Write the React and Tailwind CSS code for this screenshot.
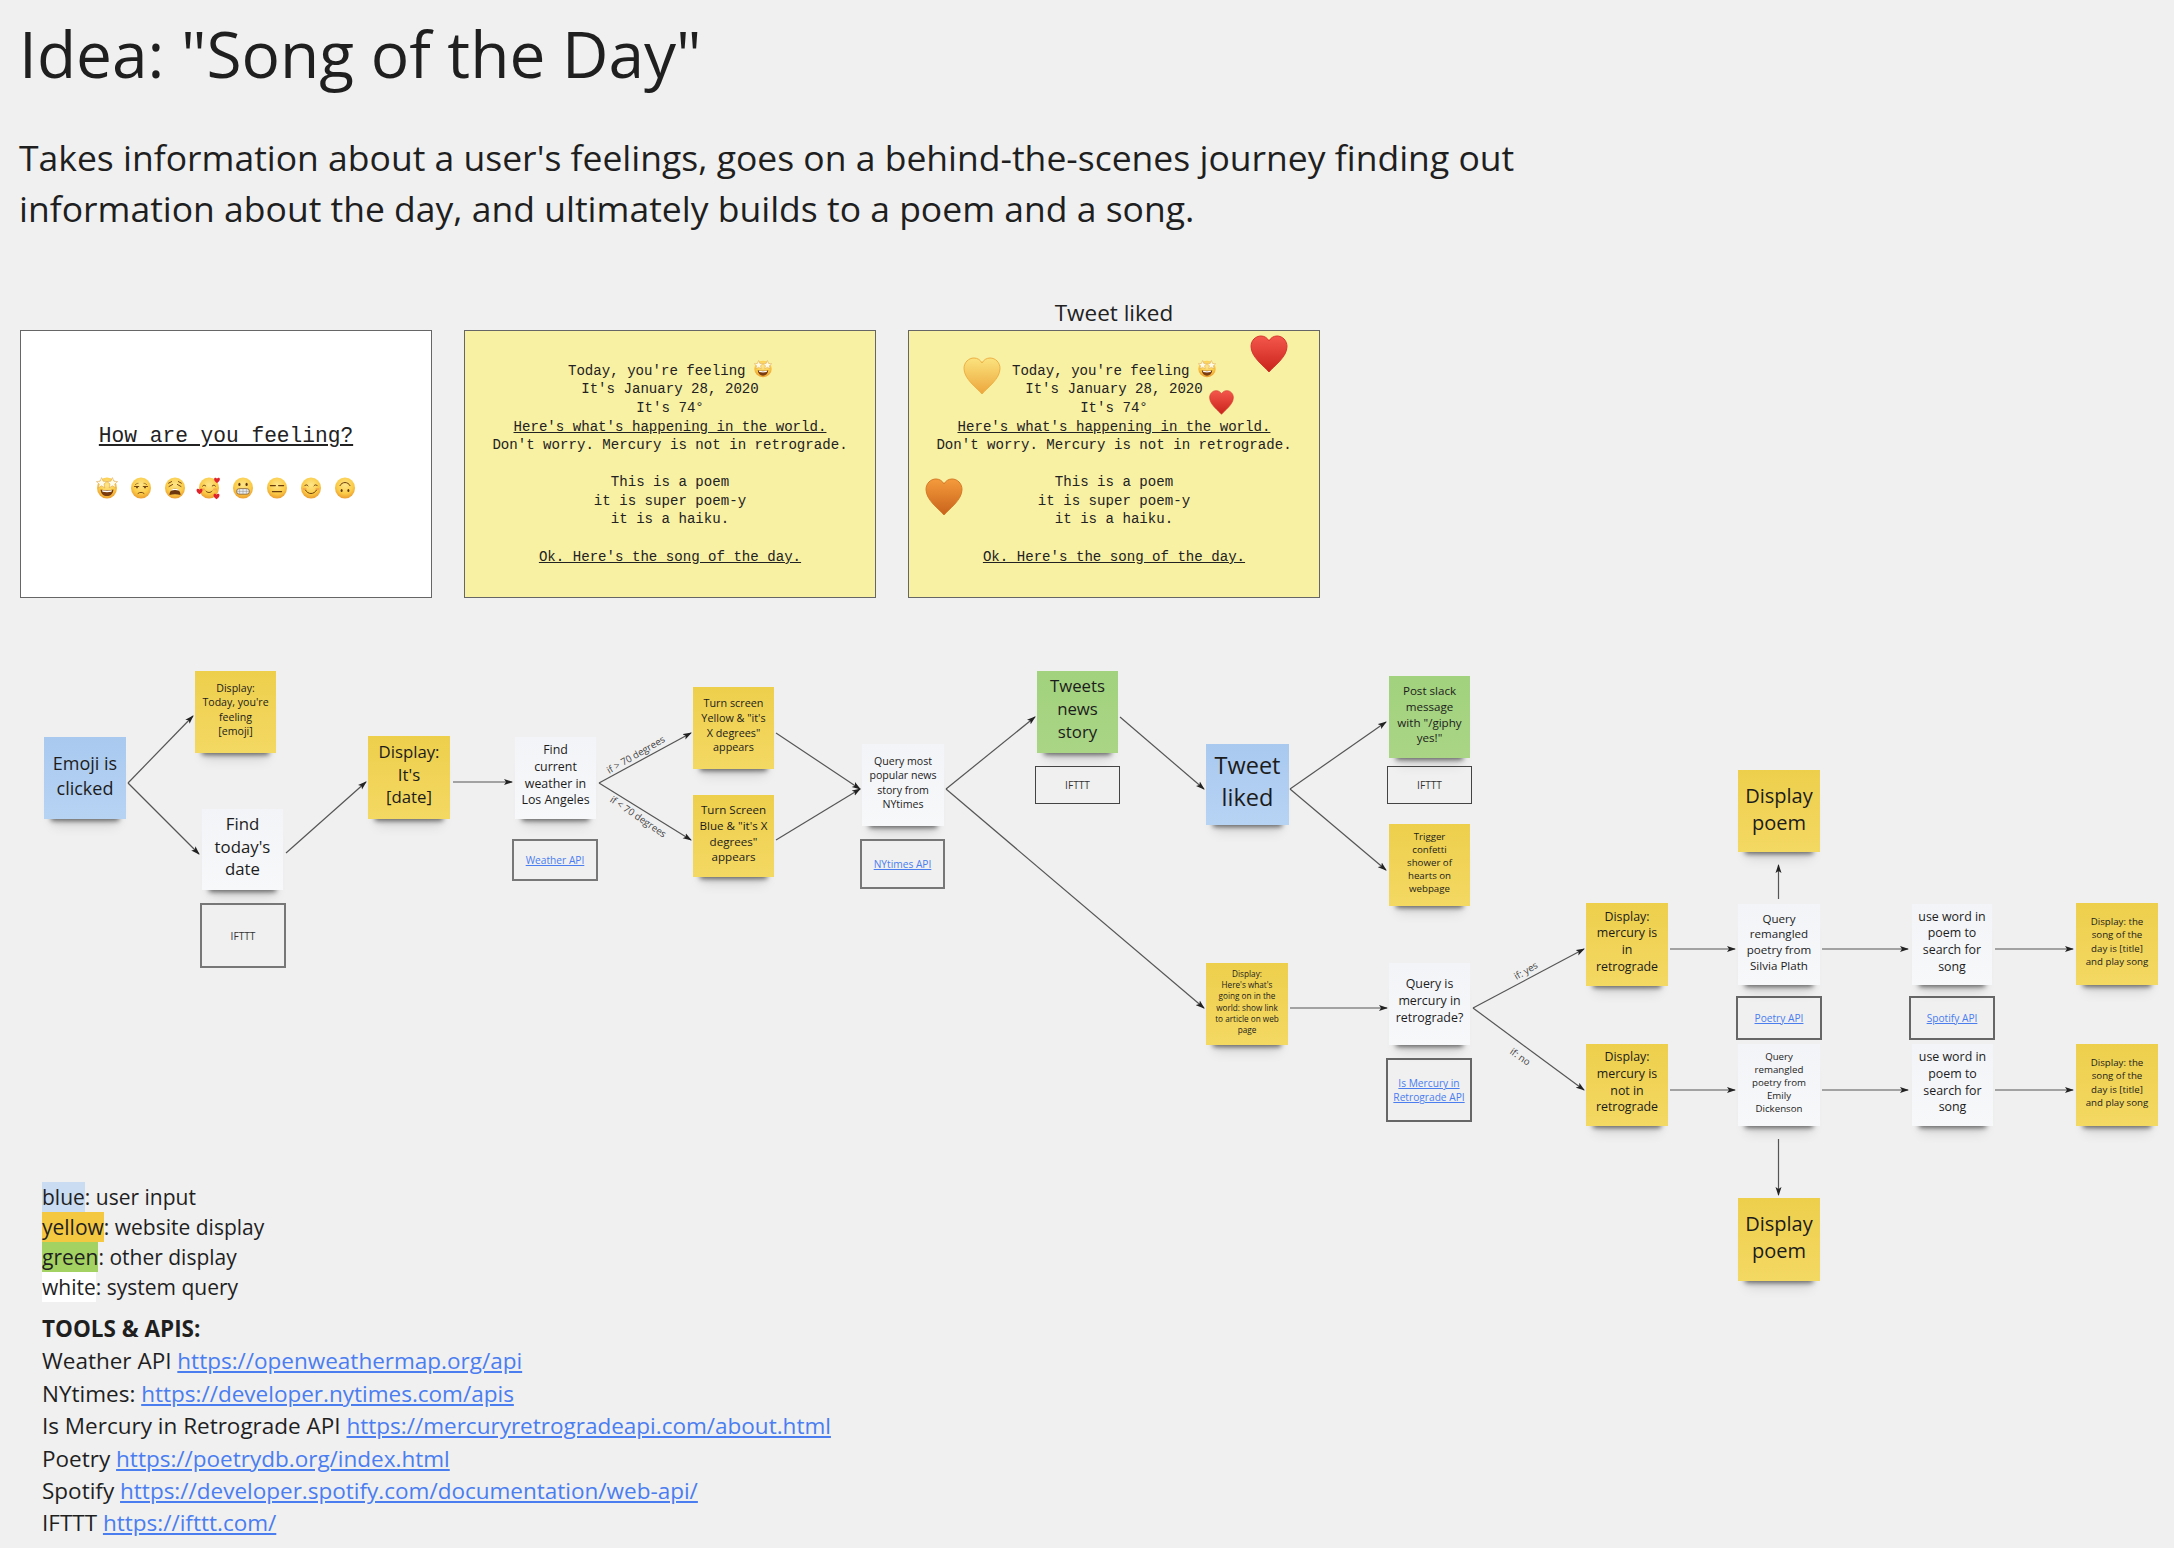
import React from 'react';

const stickyColors = {
  blue: 'from-[#a9c9ef] to-[#b7d3f4]',
  yellow: 'from-[#eecf4c] to-[#f3d862]',
  green: 'from-[#a2d27e] to-[#a9d584]',
  white: 'from-[#f3f4f7] to-[#f7f8fa]',
};

const stickies = [
  { c: 'blue', pos: 'left-[44px] top-[87px] w-[82px] h-[82px] text-[18px]', lines: ['Emoji is', 'clicked'] },
  { c: 'yellow', pos: 'left-[195px] top-[21px] w-[81px] h-[82px] text-[10.6px]', lines: ['Display:', "Today, you're", 'feeling', '[emoji]'] },
  { c: 'white', pos: 'left-[202px] top-[159px] w-[81px] h-[81px] text-[16.8px]', lines: ['Find', "today's", 'date'] },
  { c: 'yellow', pos: 'left-[368px] top-[86px] w-[82px] h-[83px] text-[16.8px]', lines: ['Display:', "It's", '[date]'] },
  { c: 'white', pos: 'left-[515px] top-[87px] w-[81px] h-[82px] text-[12.4px]', lines: ['Find', 'current', 'weather in', 'Los Angeles'] },
  { c: 'yellow', pos: 'left-[693px] top-[37px] w-[81px] h-[82px] text-[10.8px]', lines: ['Turn screen', 'Yellow & "it\'s', 'X degrees"', 'appears'] },
  { c: 'yellow', pos: 'left-[693px] top-[145px] w-[81px] h-[82px] text-[11.6px]', lines: ['Turn Screen', 'Blue & "it\'s X', 'degrees"', 'appears'] },
  { c: 'white', pos: 'left-[862px] top-[94px] w-[82px] h-[82px] text-[10.6px]', lines: ['Query most', 'popular news', 'story from', 'NYtimes'] },
  { c: 'green', pos: 'left-[1037px] top-[21px] w-[81px] h-[82px] text-[16.8px]', lines: ['Tweets', 'news', 'story'] },
  { c: 'blue', pos: 'left-[1206px] top-[94px] w-[83px] h-[81px] text-[23.5px]', lines: ['Tweet', 'liked'] },
  { c: 'green', pos: 'left-[1389px] top-[26px] w-[81px] h-[82px] text-[11.6px]', lines: ['Post slack', 'message', 'with "/giphy', 'yes!"'] },
  { c: 'yellow', pos: 'left-[1389px] top-[174px] w-[81px] h-[82px] text-[9.7px]', lines: ['Trigger', 'confetti', 'shower of', 'hearts on', 'webpage'] },
  { c: 'yellow', pos: 'left-[1206px] top-[313px] w-[82px] h-[82px] text-[8.2px]', lines: ['Display:', "Here's what's", 'going on in the', 'world: show link', 'to article on web', 'page'] },
  { c: 'white', pos: 'left-[1389px] top-[313px] w-[81px] h-[82px] text-[12.4px]', lines: ['Query is', 'mercury in', 'retrograde?'] },
  { c: 'yellow', pos: 'left-[1586px] top-[253px] w-[82px] h-[83px] text-[12.4px]', lines: ['Display:', 'mercury is', 'in', 'retrograde'] },
  { c: 'yellow', pos: 'left-[1586px] top-[394px] w-[82px] h-[82px] text-[12.4px]', lines: ['Display:', 'mercury is', 'not in', 'retrograde'] },
  { c: 'yellow', pos: 'left-[1738px] top-[120px] w-[82px] h-[82px] text-[20px]', lines: ['Display', 'poem'] },
  { c: 'white', pos: 'left-[1738px] top-[254px] w-[82px] h-[81px] text-[11.6px]', lines: ['Query', 'remangled', 'poetry from', 'Silvia Plath'] },
  { c: 'white', pos: 'left-[1738px] top-[394px] w-[82px] h-[82px] text-[9.7px]', lines: ['Query', 'remangled', 'poetry from', 'Emily', 'Dickenson'] },
  { c: 'yellow', pos: 'left-[1738px] top-[548px] w-[82px] h-[83px] text-[20px]', lines: ['Display', 'poem'] },
  { c: 'white', pos: 'left-[1912px] top-[254px] w-[80px] h-[81px] text-[12.4px]', lines: ['use word in', 'poem to', 'search for', 'song'] },
  { c: 'white', pos: 'left-[1912px] top-[394px] w-[81px] h-[82px] text-[12.4px]', lines: ['use word in', 'poem to', 'search for', 'song'] },
  { c: 'yellow', pos: 'left-[2076px] top-[253px] w-[82px] h-[82px] text-[9.7px]', lines: ['Display: the', 'song of the', 'day is [title]', 'and play song'] },
  { c: 'yellow', pos: 'left-[2076px] top-[394px] w-[82px] h-[82px] text-[9.7px]', lines: ['Display: the', 'song of the', 'day is [title]', 'and play song'] },
];

const apiBoxes = [
  { pos: 'left-[200px] top-[253px] w-[86px] h-[65px] border-2 border-[#777777]', label: 'IFTTT' },
  { pos: 'left-[512px] top-[189px] w-[86px] h-[42px] border-2 border-[#777777]', label: 'Weather API', link: true },
  { pos: 'left-[860px] top-[189px] w-[85px] h-[50px] border-2 border-[#777777]', label: 'NYtimes API', link: true },
  { pos: 'left-[1035px] top-[116px] w-[85px] h-[38px] border border-[#444444]', label: 'IFTTT' },
  { pos: 'left-[1387px] top-[116px] w-[85px] h-[38px] border border-[#444444]', label: 'IFTTT' },
  { pos: 'left-[1386px] top-[408px] w-[86px] h-[64px] border-2 border-[#666666]', label: 'Is Mercury in Retrograde API', link: true },
  { pos: 'left-[1736px] top-[346px] w-[86px] h-[44px] border-2 border-[#666666]', label: 'Poetry API', link: true },
  { pos: 'left-[1909px] top-[346px] w-[86px] h-[44px] border-2 border-[#666666]', label: 'Spotify API', link: true },
];

const arrows = [
  [128, 133, 193, 66],
  [128, 133, 199, 204],
  [286, 203, 366, 132],
  [453, 132, 512, 132],
  [599, 133, 691, 83],
  [599, 133, 691, 190],
  [776, 83, 860, 139],
  [776, 190, 860, 139],
  [946, 139, 1035, 67],
  [946, 139, 1204, 358],
  [1120, 67, 1204, 139],
  [1290, 139, 1386, 72],
  [1290, 139, 1386, 220],
  [1290, 358, 1387, 358],
  [1473, 358, 1584, 299],
  [1473, 358, 1584, 440],
  [1670, 299, 1735, 299],
  [1822, 299, 1908, 299],
  [1995, 299, 2073, 299],
  [1670, 440, 1735, 440],
  [1822, 440, 1908, 440],
  [1995, 440, 2073, 440],
  [1778.5, 249, 1778.5, 215],
  [1778.5, 489, 1778.5, 545],
];

const edgeLabels = [
  { pos: 'left-[636px] top-[105px] rotate-[-30deg]', text: 'if > 70 degrees' },
  { pos: 'left-[638px] top-[167px] rotate-[34deg]', text: 'if < 70 degrees' },
  { pos: 'left-[1526px] top-[321px] rotate-[-30deg]', text: 'if: yes' },
  { pos: 'left-[1520px] top-[407px] rotate-[35deg]', text: 'if: no' },
];

const tools = [
  ['Weather API', 'https://openweathermap.org/api'],
  ['NYtimes:', 'https://developer.nytimes.com/apis'],
  ['Is Mercury in Retrograde API', 'https://mercuryretrogradeapi.com/about.html'],
  ['Poetry', 'https://poetrydb.org/index.html'],
  ['Spotify', 'https://developer.spotify.com/documentation/web-api/'],
  ['IFTTT', 'https://ifttt.com/'],
];

function Sticky({ c, pos, lines }) {
  return (
    <div
      className={`absolute ${pos} flex flex-col items-center justify-center pb-[5px] bg-linear-to-b ${stickyColors[c]} leading-[1.35] text-center text-[#1c1c1c] whitespace-nowrap shadow-[0_9px_5px_-7px_rgba(0,0,0,0.55),0_15px_12px_-9px_rgba(0,0,0,0.12)]`}
    >
      {lines.map((line, i) => (
        <div key={i}>{line}</div>
      ))}
    </div>
  );
}

function FaceBase({ children }) {
  return (
    <svg viewBox="0 0 22 22" className="w-[22px] h-[22px] shrink-0 overflow-visible">
      <defs>
        <radialGradient id="faceFill" cx="50%" cy="35%" r="70%">
          <stop offset="0%" stopColor="#fde68a" />
          <stop offset="60%" stopColor="#fbcb46" />
          <stop offset="100%" stopColor="#e8912a" />
        </radialGradient>
      </defs>
      <ellipse cx="11" cy="11" rx="10" ry="10.6" fill="url(#faceFill)" />
      {children}
    </svg>
  );
}

const star = (cx, cy) =>
  `M${cx} ${cy - 5.2}L${cx + 1.5} ${cy - 1.6}L${cx + 5.2} ${cy - 1.2}L${cx + 2.4} ${cy + 1.2}L${cx + 3.2} ${cy + 5}L${cx} ${cy + 3}L${cx - 3.2} ${cy + 5}L${cx - 2.4} ${cy + 1.2}L${cx - 5.2} ${cy - 1.2}L${cx - 1.5} ${cy - 1.6}Z`;

const smallHeart = 'M0 2.6C-.8 1.8-2.4.8-2.4-.7-2.4-2 -.7-2.3 0-1.1.7-2.3 2.4-2 2.4-.7 2.4.8.8 1.8 0 2.6Z';

const faces = [
  <FaceBase key="star">
    <path d="M4.5 12.5c3.5 1 9.5 1 13 0-.4 4.4-3 6.6-6.5 6.6s-6.1-2.2-6.5-6.6Z" fill="#7a3b10" />
    <path d="M6 13.2c3 .6 7 .6 10 0l-.5 1.6c-2.8.5-6.2.5-9 0Z" fill="#fff" />
    <path d={star(5.6, 5.8)} fill="#fffbe8" stroke="#d89a3a" strokeWidth=".5" />
    <path d={star(16.4, 5.8)} fill="#fffbe8" stroke="#d89a3a" strokeWidth=".5" />
  </FaceBase>,
  <FaceBase key="unamused">
    <path d="M4.5 9.5h4.2M13.3 9.5h4.2" stroke="#7a4a14" strokeWidth="1.2" strokeLinecap="round" />
    <path d="M5 8c1-1.2 2.2-1.7 3.4-1.7M17 8c-1-1.2-2.2-1.7-3.4-1.7" stroke="#7a4a14" strokeWidth=".7" fill="none" />
    <circle cx="7" cy="10.4" r=".9" fill="#5a3510" />
    <circle cx="15" cy="10.4" r=".9" fill="#5a3510" />
    <path d="M8 16.4c1.8-1.4 4.2-1.4 6 0" stroke="#7a4a14" strokeWidth="1" fill="none" strokeLinecap="round" />
  </FaceBase>,
  <FaceBase key="weary">
    <path d="M5 9.5l3.6-2M17 9.5l-3.6-2M4.6 6.2l3-1.6M17.4 6.2l-3-1.6" stroke="#7a4a14" strokeWidth="1" strokeLinecap="round" />
    <path d="M5.4 18c.4-4 2.6-6.2 5.6-6.2s5.2 2.2 5.6 6.2c-3.4-1-7.8-1-11.2 0Z" fill="#6b3510" />
    <path d="M7 13.8c2.4-1.2 5.6-1.2 8 0l-.6-1.2c-2-1-4.8-1-6.8 0Z" fill="#fff" />
  </FaceBase>,
  <FaceBase key="hearts">
    <path d="M4.6 9c.9-1.1 2.3-1.1 3.2 0M14.2 9c.9-1.1 2.3-1.1 3.2 0" stroke="#6b3e10" strokeWidth="1" fill="none" strokeLinecap="round" />
    <path d="M8 14.2c1.6 1.8 4.4 1.8 6 0" stroke="#6b3e10" strokeWidth="1" fill="none" strokeLinecap="round" />
    <ellipse cx="5" cy="12.4" rx="2" ry="1.2" fill="#f2904a" opacity=".55" />
    <ellipse cx="17" cy="12.4" rx="2" ry="1.2" fill="#f2904a" opacity=".55" />
    <path d={smallHeart} fill="#e0232b" transform="translate(19 3) scale(1.2)" />
    <path d={smallHeart} fill="#e0232b" transform="translate(1.5 14) scale(1.25)" />
    <path d={smallHeart} fill="#e0232b" transform="translate(18.5 19) scale(1.25)" />
  </FaceBase>,
  <FaceBase key="grimace">
    <ellipse cx="7.4" cy="7.4" rx="1.1" ry="1.6" fill="#5a3510" />
    <ellipse cx="14.6" cy="7.4" rx="1.1" ry="1.6" fill="#5a3510" />
    <rect x="4.6" y="11.6" width="12.8" height="5.6" rx="2.6" fill="#e9edf0" stroke="#7a4a14" strokeWidth=".7" />
    <path d="M4.8 14.4h12.4M7.6 11.8v5.2M11 11.6v5.6M14.4 11.8v5.2" stroke="#8d8d8d" strokeWidth=".5" />
  </FaceBase>,
  <FaceBase key="flat">
    <path d="M4.4 8.6h5M12.6 8.6h5M6.4 14.6h9.2" stroke="#6b3e10" strokeWidth="1.2" strokeLinecap="round" />
  </FaceBase>,
  <FaceBase key="smile">
    <path d="M4.6 8.8c.9-1.3 2.5-1.3 3.4 0M14 8.8c.9-1.3 2.5-1.3 3.4 0" stroke="#6b3e10" strokeWidth="1" fill="none" strokeLinecap="round" />
    <path d="M5.4 13c2.6 4.8 8.6 4.8 11.2 0" stroke="#6b3e10" strokeWidth="1" fill="none" strokeLinecap="round" />
    <ellipse cx="4.6" cy="12" rx="2" ry="1.2" fill="#f2904a" opacity=".55" />
    <ellipse cx="17.4" cy="12" rx="2" ry="1.2" fill="#f2904a" opacity=".55" />
  </FaceBase>,
  <FaceBase key="upside">
    <path d="M6 8.6c2-4.2 8-4.2 10 0" stroke="#6b3e10" strokeWidth="1" fill="none" strokeLinecap="round" />
    <ellipse cx="7.6" cy="13.6" rx="1" ry="1.5" fill="#5a3510" />
    <ellipse cx="14.4" cy="13.6" rx="1" ry="1.5" fill="#5a3510" />
  </FaceBase>,
];

function StarFaceInline() {
  return (
    <svg viewBox="0 0 22 22" className="inline-block w-[18px] h-[18px] align-[-3px] overflow-visible">
      <defs>
        <radialGradient id="faceFillInline" cx="50%" cy="35%" r="70%">
          <stop offset="0%" stopColor="#fde68a" />
          <stop offset="60%" stopColor="#fbcb46" />
          <stop offset="100%" stopColor="#e8912a" />
        </radialGradient>
      </defs>
      <ellipse cx="11" cy="11" rx="10.6" ry="10" fill="url(#faceFillInline)" />
      <path d="M4.5 12.5c3.5 1 9.5 1 13 0-.4 4.4-3 6.6-6.5 6.6s-6.1-2.2-6.5-6.6Z" fill="#7a3b10" />
      <path d="M6 13.2c3 .6 7 .6 10 0l-.5 1.6c-2.8.5-6.2.5-9 0Z" fill="#fff" />
      <path d={star(5.6, 5.8)} fill="#fffbe8" stroke="#d89a3a" strokeWidth=".5" />
      <path d={star(16.4, 5.8)} fill="#fffbe8" stroke="#d89a3a" strokeWidth=".5" />
    </svg>
  );
}

function Heart({ id, from, to, edge, pos }) {
  return (
    <svg viewBox="0 0 38 38" className={`absolute ${pos}`}>
      <defs>
        <linearGradient id={id} x1="0" y1="0" x2="0" y2="1">
          <stop offset="0%" stopColor={from} />
          <stop offset="100%" stopColor={to} />
        </linearGradient>
      </defs>
      <path
        d="M19 37C14 31 1 22 1 11.5 1 5.5 5.5 1 11 1c3.5 0 6.5 2 8 5 1.5-3 4.5-5 8-5 5.5 0 10 4.5 10 10.5C37 22 24 31 19 37Z"
        fill={`url(#${id})`}
        stroke={edge}
        strokeWidth="1"
      />
    </svg>
  );
}

function Poem() {
  return (
    <div className="pb-[2px] font-['Liberation_Mono',monospace] text-[14.1px] leading-[18.6px] text-center text-[#222222] whitespace-pre">
      <div>Today, you're feeling <StarFaceInline /></div>
      <div>It's January 28, 2020</div>
      <div>It's 74°</div>
      <div className="underline">Here's what's happening in the world.</div>
      <div>Don't worry. Mercury is not in retrograde.</div>
      <div>&nbsp;</div>
      <div>This is a poem</div>
      <div>it is super poem-y</div>
      <div>it is a haiku.</div>
      <div>&nbsp;</div>
      <div className="underline">Ok. Here's the song of the day.</div>
    </div>
  );
}

function ScreenRow() {
  return (
    <div className="mt-[64px] ml-[20px] flex gap-[32px] items-end">
      <div className="w-[412px] h-[268px] bg-white border border-[#666666] flex flex-col items-center justify-center pb-[8px]">
        <div className="font-['Liberation_Mono',monospace] text-[21.2px] leading-[30px] underline text-[#222222]">
          How are you feeling?
        </div>
        <div className="mt-[26px] flex gap-[12px]">{faces}</div>
      </div>
      <div className="w-[412px] h-[268px] bg-[#f8f0a3] border border-[#666666] flex items-center justify-center">
        <Poem />
      </div>
      <div className="w-[412px] flex flex-col">
        <div className="h-[30px] mb-[2px] text-center text-[22.5px] leading-[30px] text-[#222222]">Tweet liked</div>
        <div className="relative h-[268px] bg-[#f8f0a3] border border-[#666666] flex items-center justify-center">
          <Poem />
          <Heart id="heartYellow" from="#fbe37e" to="#eda63c" edge="#eeb043" pos="left-[54px] top-[26px] w-[38px] h-[38px]" />
          <Heart id="heartRed" from="#f4574c" to="#c9231b" edge="#d8362c" pos="left-[341px] top-[4px] w-[38px] h-[38px]" />
          <Heart id="heartRedSmall" from="#f4574c" to="#c9231b" edge="#d8362c" pos="left-[300px] top-[59px] w-[25px] h-[25px]" />
          <Heart id="heartOrange" from="#f59b3c" to="#c8621b" edge="#d67a28" pos="left-[16px] top-[147px] w-[38px] h-[38px]" />
        </div>
      </div>
    </div>
  );
}

function Diagram() {
  return (
    <div className="relative mt-[52px] h-[520px]">
      <svg className="absolute inset-0 w-full h-full overflow-visible" fill="none">
        <defs>
          <marker id="arrowHead" markerUnits="userSpaceOnUse" markerWidth="9" markerHeight="7" refX="8" refY="3.5" orient="auto">
            <path d="M0 .5L9 3.5 0 6.5 2 3.5Z" fill="#222222" />
          </marker>
        </defs>
        {arrows.map(([x1, y1, x2, y2], i) => (
          <line key={i} x1={x1} y1={y1} x2={x2} y2={y2} stroke="#555555" strokeWidth="1.2" markerEnd="url(#arrowHead)" />
        ))}
      </svg>

      {stickies.map((s, i) => (
        <Sticky key={i} {...s} />
      ))}

      {apiBoxes.map((b, i) => (
        <div key={i} className={`absolute ${b.pos} flex items-center justify-center px-[4px] text-center text-[10.2px] leading-[14px]`}>
          {b.link ? <a className="text-[#4a7df0] underline">{b.label}</a> : <span className="text-[#333333]">{b.label}</span>}
        </div>
      ))}

      {edgeLabels.map((l, i) => (
        <div key={i} className={`absolute ${l.pos} -translate-x-1/2 -translate-y-1/2 text-[9.6px] leading-[12px] whitespace-nowrap text-[#444444]`}>
          {l.text}
        </div>
      ))}
    </div>
  );
}

function Legend() {
  return (
    <div className="pt-[12px] pl-[42px] text-[#1f1f1f]">
      <div className="text-[21px] leading-[30px]">
        <div><span className="inline-block bg-[#c9dcf2]">blue</span>: user input</div>
        <div><span className="inline-block bg-[#f5c842]">yellow</span>: website display</div>
        <div><span className="inline-block bg-[#a3d162]">green</span>: other display</div>
        <div><span className="inline-block bg-white">white</span>: system query</div>
      </div>
      <div className="mt-[11px] text-[22.5px] leading-[32.4px]">
        <div className="font-bold">TOOLS &amp; APIS:</div>
        {tools.map(([name, url]) => (
          <div key={url}>
            {name} <a className="text-[#4a7df0] underline">{url}</a>
          </div>
        ))}
      </div>
    </div>
  );
}

export default function App() {
  return (
    <div className="w-[2174px] h-[1548px] overflow-hidden bg-[#f0f0f0] font-['Open_Sans','Noto_Sans',sans-serif] text-[#1f1f1f]">
      <div className="pt-[14px] pl-[19px]">
        <h1 className="text-[64px] leading-[80px] font-normal">Idea: "Song of the Day"</h1>
        <p className="mt-[38px] w-[1540px] text-[35.5px] leading-[51px]">
          Takes information about a user's feelings, goes on a behind-the-scenes journey finding out information about the day, and ultimately builds to a poem and a song.
        </p>
      </div>
      <ScreenRow />
      <Diagram />
      <Legend />
    </div>
  );
}
